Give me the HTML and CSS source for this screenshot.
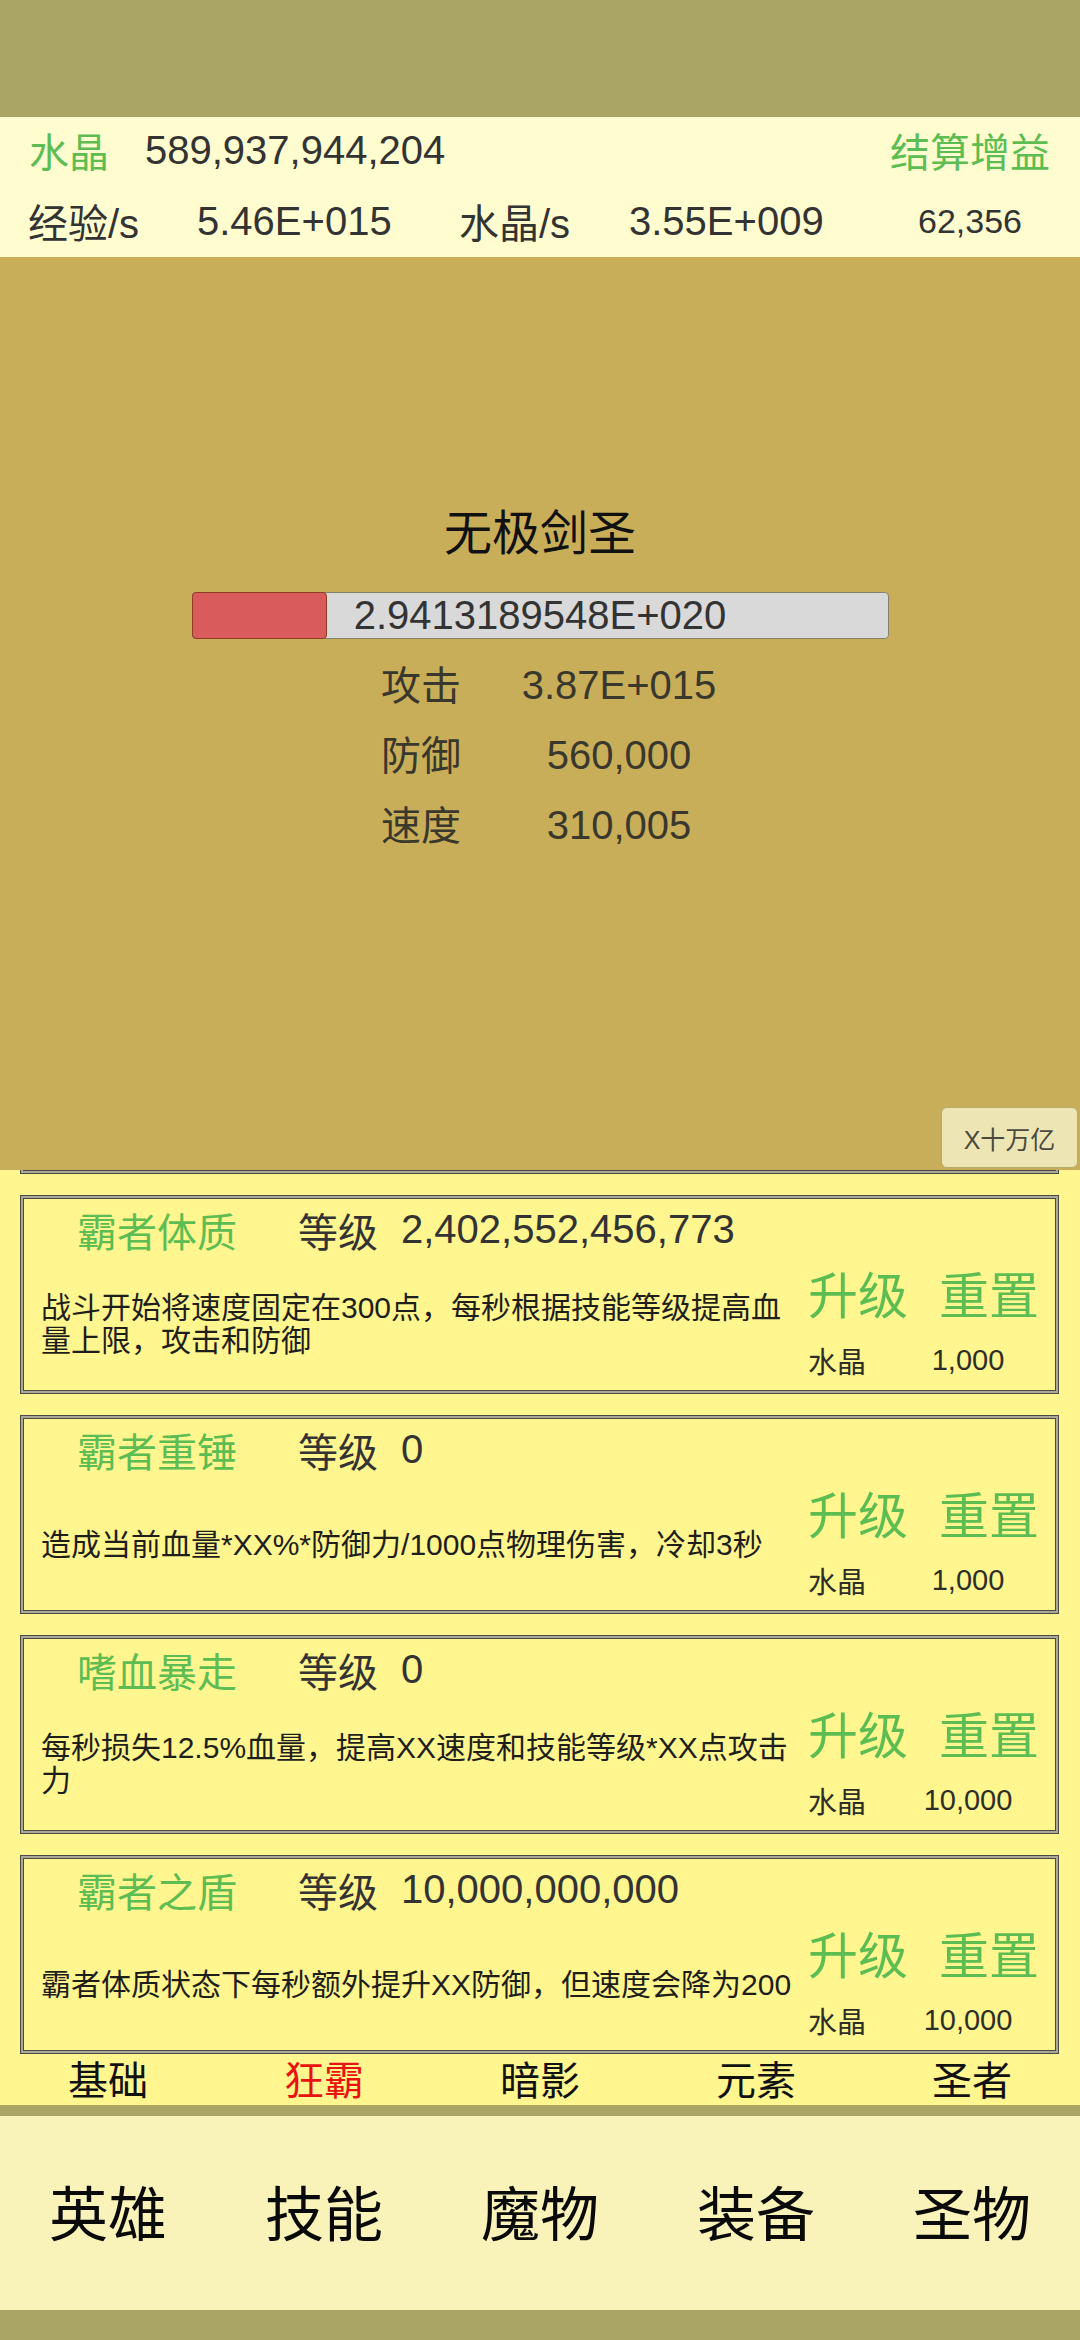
FILE: index.html
```html
<!DOCTYPE html>
<html lang="zh">
<head>
<meta charset="utf-8">
<title>技能</title>
<link rel="stylesheet" href="styles.css">
</head>
<body>
<div class="app">
  <div class="topbar"></div>

  <div class="info">
    <div class="info-row1">
      <span class="crystal-label">水晶</span>
      <span class="crystal-value">589,937,944,204</span>
      <span class="settle">结算增益</span>
    </div>
    <div class="info-row2">
      <span>经验/s</span>
      <span>5.46E+015</span>
      <span>水晶/s</span>
      <span>3.55E+009</span>
      <span class="small-val">62,356</span>
    </div>
  </div>

  <div class="battle">
    <div class="enemy-name">无极剑圣</div>
    <div class="hp-bar">
      <div class="hp-fill" style="width:135px"></div>
      <span class="hp-text">2.9413189548E+020</span>
    </div>
    <div class="stats">
      <span class="stat-label">攻击</span><span class="stat-value">3.87E+015</span>
      <span class="stat-label">防御</span><span class="stat-value">560,000</span>
      <span class="stat-label">速度</span><span class="stat-value">310,005</span>
    </div>
    <div class="mult-btn">X十万亿</div>
  </div>

  <div class="skill-list">
    <div class="card"></div>

    <div class="card">
      <div class="card-head">
        <span class="skill-name">霸者体质</span>
        <span class="lvl-label">等级</span>
        <span class="lvl-value">2,402,552,456,773</span>
      </div>
      <div class="card-body">
        <p class="desc">战斗开始将速度固定在300点，每秒根据技能等级提高血量上限，攻击和防御</p>
        <div class="actions">
          <div class="btns"><span class="btn">升级</span><span class="btn">重置</span></div>
          <div class="cost"><span class="cost-label">水晶</span><span class="cost-value">1,000</span></div>
        </div>
      </div>
    </div>

    <div class="card">
      <div class="card-head">
        <span class="skill-name">霸者重锤</span>
        <span class="lvl-label">等级</span>
        <span class="lvl-value">0</span>
      </div>
      <div class="card-body">
        <p class="desc">造成当前血量*XX%*防御力/1000点物理伤害，冷却3秒</p>
        <div class="actions">
          <div class="btns"><span class="btn">升级</span><span class="btn">重置</span></div>
          <div class="cost"><span class="cost-label">水晶</span><span class="cost-value">1,000</span></div>
        </div>
      </div>
    </div>

    <div class="card">
      <div class="card-head">
        <span class="skill-name">嗜血暴走</span>
        <span class="lvl-label">等级</span>
        <span class="lvl-value">0</span>
      </div>
      <div class="card-body">
        <p class="desc">每秒损失12.5%血量，提高XX速度和技能等级*XX点攻击力</p>
        <div class="actions">
          <div class="btns"><span class="btn">升级</span><span class="btn">重置</span></div>
          <div class="cost"><span class="cost-label">水晶</span><span class="cost-value">10,000</span></div>
        </div>
      </div>
    </div>

    <div class="card">
      <div class="card-head">
        <span class="skill-name">霸者之盾</span>
        <span class="lvl-label">等级</span>
        <span class="lvl-value">10,000,000,000</span>
      </div>
      <div class="card-body">
        <p class="desc">霸者体质状态下每秒额外提升XX防御，但速度会降为200</p>
        <div class="actions">
          <div class="btns"><span class="btn">升级</span><span class="btn">重置</span></div>
          <div class="cost"><span class="cost-label">水晶</span><span class="cost-value">10,000</span></div>
        </div>
      </div>
    </div>
  </div>

  <div class="tabs">
    <span>基础</span>
    <span class="active">狂霸</span>
    <span>暗影</span>
    <span>元素</span>
    <span>圣者</span>
  </div>
  <div class="strip"></div>
  <nav class="bottom-nav">
    <span>英雄</span>
    <span>技能</span>
    <span>魔物</span>
    <span>装备</span>
    <span>圣物</span>
  </nav>
  <div class="bottom-bar"></div>
</div>
</body>
</html>
```

FILE: styles.css
```css
html, body {
  margin: 0;
  padding: 0;
}
body {
  width: 1080px;
  height: 2340px;
  overflow: hidden;
  font-family: "Liberation Sans", "Noto Sans CJK SC", sans-serif;
  color: #333333;
  background: #aaa564;
}
.app {
  display: flex;
  flex-direction: column;
  width: 1080px;
  height: 2340px;
}
.topbar {
  height: 117px;
  background: #aaa564;
  flex-shrink: 0;
}

/* info panel */
.info {
  height: 140px;
  background: #fffdd0;
  flex-shrink: 0;
  font-size: 40px;
}
.info-row1 {
  box-sizing: border-box;
  height: 70px;
  display: flex;
  align-items: center;
  padding: 0 30px 4px 29px;
}
.crystal-label {
  width: 116px;
  color: #5dbd52;
}
.crystal-value {
  flex: 1;
}
.settle {
  color: #5dbd52;
}
.info-row2 {
  box-sizing: border-box;
  height: 70px;
  display: grid;
  grid-template-columns: 169px 262px 170px 240px 202px;
  align-items: center;
  padding: 0 0 2px 28px;
}
.small-val {
  font-size: 34px;
  text-align: center;
}

/* battle area */
.battle {
  position: relative;
  height: 913px;
  flex-shrink: 0;
  background: #c9ae5a;
  display: flex;
  flex-direction: column;
  align-items: center;
}
.enemy-name {
  margin-top: 247px;
  height: 60px;
  line-height: 60px;
  font-size: 48px;
  color: #111111;
}
.hp-bar {
  position: relative;
  margin-top: 28px;
  box-sizing: border-box;
  width: 697px;
  height: 47px;
  background: #d9d9d9;
  border: 1px solid #84826f;
  border-radius: 4px;
  display: flex;
  align-items: center;
  justify-content: center;
}
.hp-fill {
  position: absolute;
  left: -1px;
  top: -1px;
  bottom: -1px;
  box-sizing: border-box;
  background: #d95b5b;
  border: 1px solid #8e3c24;
  border-radius: 4px;
}
.hp-text {
  position: relative;
  font-size: 40px;
  line-height: 45px;
  color: #333333;
}
.stats {
  align-self: flex-start;
  margin: 11px 0 0 381px;
  display: grid;
  grid-template-columns: 119px 238px;
  grid-auto-rows: 70px;
  align-items: center;
  font-size: 40px;
  color: #3a382c;
}
.stat-label {
  position: relative;
  top: -2px;
}
.stat-value {
  display: flex;
  justify-content: center;
  white-space: nowrap;
}
.mult-btn {
  position: absolute;
  right: 2px;
  bottom: 2px;
  box-sizing: border-box;
  width: 137px;
  height: 61px;
  background: #ede6b4;
  border: 1px solid #b7ab6c;
  border-radius: 6px;
  display: flex;
  align-items: center;
  justify-content: center;
  font-size: 25px;
  color: #4a4a40;
}

/* skill list */
.skill-list {
  height: 888px;
  flex-shrink: 0;
  box-sizing: border-box;
  padding-bottom: 4px;
  background: #fff68f;
  overflow: hidden;
  display: flex;
  flex-direction: column;
  justify-content: flex-end;
  gap: 21px;
}
.card {
  flex-shrink: 0;
  box-sizing: border-box;
  height: 199px;
  margin: 0 21px 0 20px;
  border: 1px solid #4b4a42;
  box-shadow: inset 0 0 0 2px #aaa897, inset 0 0 0 3px #4b4a42;
  display: flex;
  flex-direction: column;
}
.card-head {
  box-sizing: border-box;
  height: 68px;
  display: flex;
  align-items: center;
  padding: 0 0 1px 56px;
  font-size: 40px;
  white-space: nowrap;
}
.skill-name {
  width: 221px;
  color: #5dbd52;
}
.lvl-label {
  width: 103px;
}
.card-body {
  height: 120px;
  display: flex;
}
.desc {
  margin: 0 0 0 20px;
  width: 760px;
  align-self: center;
  font-size: 30px;
  line-height: 33px;
  color: #1e1e1a;
}
.actions {
  margin-left: 7px;
  display: flex;
  flex-direction: column;
}
.btns {
  height: 56px;
  display: flex;
  align-items: center;
  gap: 31px;
  font-size: 50px;
  color: #5dbd52;
}
.cost {
  margin-top: 20px;
  height: 40px;
  display: flex;
  align-items: center;
  font-size: 29px;
  color: #2e2e28;
}
.cost-label {
  width: 90px;
}
.cost-value {
  width: 140px;
  display: flex;
  justify-content: center;
}

/* tabs */
.tabs {
  height: 47px;
  flex-shrink: 0;
  background: #fff68f;
  display: grid;
  grid-template-columns: repeat(5, 1fr);
  align-items: center;
  text-align: center;
  font-size: 40px;
  line-height: 47px;
  color: #111111;
}
.tabs .active {
  color: #e8130e;
}
.strip {
  height: 11px;
  flex-shrink: 0;
  background: #aaa564;
}
.bottom-nav {
  box-sizing: border-box;
  height: 194px;
  flex-shrink: 0;
  padding-bottom: 6px;
  background: #f9f3b9;
  display: grid;
  grid-template-columns: repeat(5, 1fr);
  align-items: center;
  text-align: center;
  font-size: 59px;
  color: #0a0a0a;
}
.bottom-bar {
  height: 30px;
  flex-shrink: 0;
  background: #aaa564;
}
```
